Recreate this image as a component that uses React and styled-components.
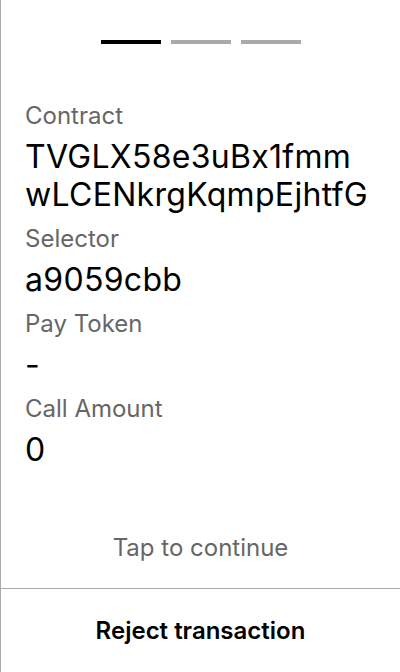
import React from "react";
import styled, { createGlobalStyle } from "styled-components";

const GlobalStyle = createGlobalStyle`
  html, body {
    margin: 0;
    padding: 0;
    background: #fff;
  }
  body {
    font-family: Inter, "Noto Sans", sans-serif;
    color: #000;
  }
`;

const fields = [
  { label: "Contract", value: "TVGLX58e3uBx1fmmwLCENkrgKqmpEjhtfG" },
  { label: "Selector", value: "a9059cbb" },
  { label: "Pay Token", value: "-" },
  { label: "Call Amount", value: "0" },
];

export default function App() {
  return (
    <>
      <GlobalStyle />
      <Screen>
        <Steps>
          <Step $active />
          <Step />
          <Step />
        </Steps>
        <Details>
          {fields.map((f) => (
            <Field key={f.label}>
              <Label>{f.label}</Label>
              <Value>{f.value}</Value>
            </Field>
          ))}
        </Details>
        <Hint>Tap to continue</Hint>
        <Footer>
          <RejectButton>Reject transaction</RejectButton>
        </Footer>
      </Screen>
    </>
  );
}

const Screen = styled.div`
  height: 100vh;
  box-sizing: border-box;
  border-left: 1px solid #aaa;
  display: flex;
  flex-direction: column;
`;

const Steps = styled.div`
  display: flex;
  justify-content: center;
  gap: 10px;
  padding-top: 40px;
`;

const Step = styled.div`
  width: 60px;
  height: 4px;
  background: ${({ $active }) => ($active ? "#000" : "#aaa")};
`;

const Details = styled.div`
  flex: 1;
  display: flex;
  flex-direction: column;
  gap: 10px;
  padding: 57px 28px 0 24px;
`;

const Field = styled.div`
  display: flex;
  flex-direction: column;
  gap: 8px;
`;

const Label = styled.div`
  font-size: 24px;
  line-height: 29px;
  color: #666;
`;

const Value = styled.div`
  font-size: 32px;
  line-height: 38px;
  letter-spacing: 0.3px;
  word-break: break-all;
`;

const Hint = styled.div`
  text-align: center;
  font-size: 24px;
  line-height: 29px;
  color: #666;
  padding-bottom: 26px;
`;

const Footer = styled.div`
  border-top: 1px solid #aaa;
  height: 83px;
  display: flex;
  align-items: center;
  justify-content: center;
`;

const RejectButton = styled.button`
  border: none;
  background: none;
  padding: 0;
  font-family: Inter, "Noto Sans", sans-serif;
  font-size: 24px;
  line-height: 29px;
  font-weight: 600;
  color: #000;
  cursor: pointer;
`;
